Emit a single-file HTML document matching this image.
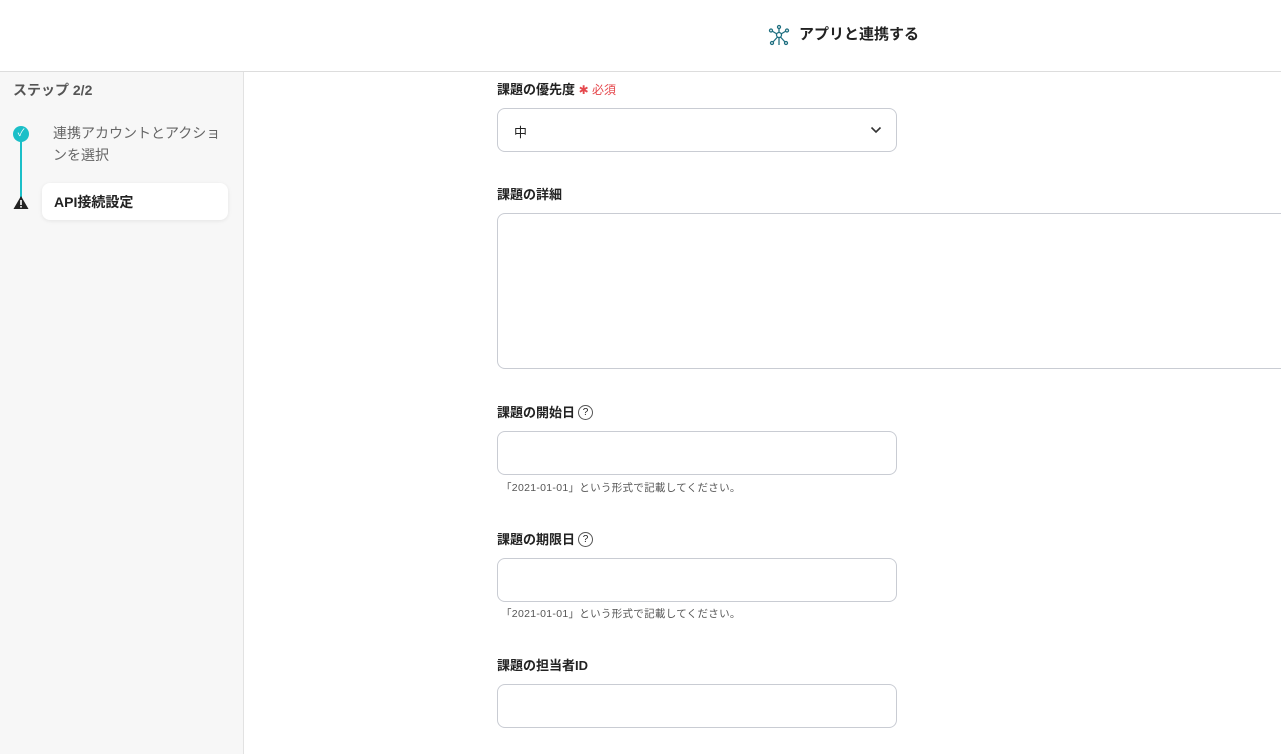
<!DOCTYPE html>
<html><head><meta charset="utf-8"><style>
*{box-sizing:border-box;margin:0;padding:0}
body{width:1281px;height:754px;overflow:hidden;background:#fff;font-family:"Liberation Sans","Noto Sans CJK JP",sans-serif;color:#333;position:relative}
.hdr{position:absolute;left:0;top:0;width:1281px;height:72px;border-bottom:1px solid #ddd;background:#fff}
.hdr .t{position:absolute;left:799px;top:23px;font-size:15px;font-weight:bold;color:#222}
.side{position:absolute;left:0;top:72px;width:244px;height:682px;background:#f7f7f7;border-right:1px solid #e2e2e2}
.abs{position:absolute}
.lbl{position:absolute;left:497px;font-size:13px;font-weight:bold;color:#222;line-height:16px}
.inp{position:absolute;left:497px;width:400px;height:44px;border:1px solid #c9ccd3;border-radius:8px;background:#fff}
.hint{position:absolute;left:501px;font-size:10.5px;color:#555;letter-spacing:.3px}
.q{display:inline-block;width:15px;height:15px;border:1.3px solid #555;border-radius:50%;font-size:10px;text-align:center;line-height:13px;vertical-align:top;margin-left:3px;font-weight:normal}
</style></head><body>
<div class="hdr">
<svg class="abs" style="left:768px;top:24px" width="22" height="22" viewBox="0 0 22 22" fill="none" stroke="#1f6f80" stroke-width="1.3"><circle cx="11" cy="11" r="2.5"/><line x1="11" y1="8.5" x2="11" y2="4"/><circle cx="11" cy="3" r="1.5"/><line x1="9" y1="10" x2="4" y2="7"/><circle cx="3" cy="6.5" r="1.5"/><line x1="13" y1="10" x2="18" y2="7"/><circle cx="19" cy="6.5" r="1.5"/><line x1="9.5" y1="13" x2="5" y2="18"/><circle cx="4" cy="19" r="1.5"/><line x1="12.5" y1="13" x2="17" y2="18"/><circle cx="18" cy="19" r="1.5"/><line x1="11" y1="13.5" x2="11" y2="21"/></svg>
<div class="t">アプリと連携する</div></div>
<div class="side">
<div class="abs" style="left:13px;top:8px;font-size:14px;font-weight:bold;color:#555">ステップ 2/2</div>
<div class="abs" style="left:20px;top:62px;width:2px;height:70px;background:#1bbfc8"></div>
<div class="abs" style="left:13px;top:54px;width:16px;height:16px;border-radius:50%;background:#1bbfc8;color:#fff;font-size:10px;text-align:center;line-height:16px">✓</div>
<div class="abs" style="left:53px;top:50px;font-size:14px;color:#666;line-height:22px;width:170px">連携アカウントとアクションを選択</div>
<svg class="abs" style="left:13px;top:123px" width="16" height="15" viewBox="0 0 16 15"><path d="M8 1L15.5 14H0.5Z" fill="#222"/><rect x="7.2" y="5" width="1.6" height="5" fill="#fff"/><rect x="7.2" y="11" width="1.6" height="1.6" fill="#fff"/></svg>
<div class="abs" style="left:42px;top:111px;width:186px;height:37px;background:#fff;border-radius:8px;box-shadow:0 1px 4px rgba(0,0,0,.08);font-size:14px;font-weight:bold;color:#222;padding:9px 12px">API接続設定</div>
</div>
<div class="lbl" style="top:82px">課題の優先度 <span style="color:#e5484d;font-size:12px;font-weight:normal">✱ 必須</span></div>
<div class="inp" style="top:108px"><span class="abs" style="left:16px;top:13px;font-size:13px;color:#222">中</span><svg class="abs" style="left:372px;top:17px" width="12" height="8" viewBox="0 0 12 8" fill="none" stroke="#333" stroke-width="1.6"><path d="M1.5 1.5L6 6L10.5 1.5"/></svg></div>
<div class="lbl" style="top:187px">課題の詳細</div>
<div class="inp" style="top:213px;width:790px;height:156px;border-radius:8px 0 0 8px"></div>
<div class="lbl" style="top:405px">課題の開始日<span class="q">?</span></div>
<div class="inp" style="top:431px"></div>
<div class="hint" style="top:480px">「2021-01-01」という形式で記載してください。</div>
<div class="lbl" style="top:532px">課題の期限日<span class="q">?</span></div>
<div class="inp" style="top:558px"></div>
<div class="hint" style="top:606px">「2021-01-01」という形式で記載してください。</div>
<div class="lbl" style="top:658px">課題の担当者ID</div>
<div class="inp" style="top:684px"></div>
</body></html>
